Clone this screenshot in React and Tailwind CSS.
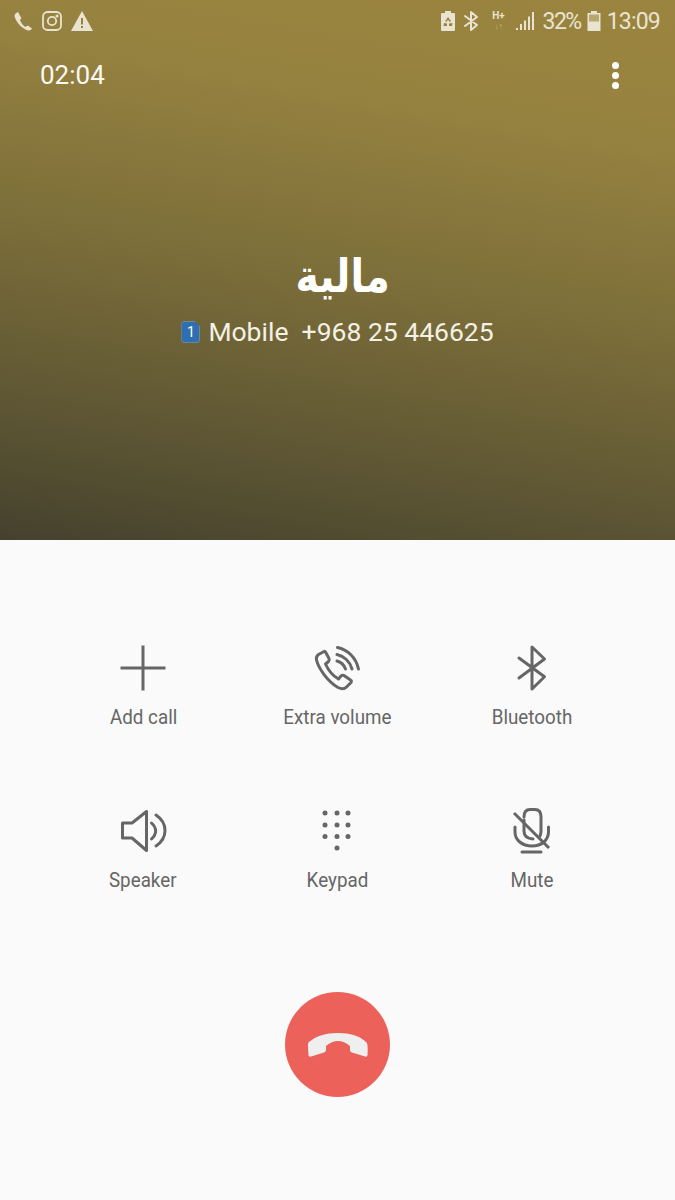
import { Fragment } from 'react'

const stroke = '#666666'

function AddIcon() {
  return (
    <svg width="48" height="48" viewBox="0 0 48 48" fill="none" stroke={stroke} strokeWidth="3">
      <path d="M24 1.500V46.500M1.500 24H46.500" />
    </svg>
  )
}

function VolumeIcon() {
  return (
    <svg width="48" height="48" viewBox="0 0 48 48" fill="none" stroke={stroke} strokeWidth="3" strokeLinecap="round" strokeLinejoin="round">
      <path d="M11 7.500 5.500 10.500C3.500 12 3 14 3.500 16 5.500 24 14 37 25 43.500 29 45.500 31.500 45 33.500 43L38 38.500C38.500 37.500 38.500 36.500 37.500 36L31 31.500C30 31 29 31 28 32L25.500 35C20 32 15 25.500 12.500 20L15.500 17.500C16.500 16.500 16.500 15.500 16 14.500L12.500 8C12 7.500 11.500 7.200 11 7.500Z" />
      <path d="M24 17C28 18 31 21 32.500 25" />
      <path d="M24 10.500C31 12 37 17.500 39 25" />
      <path d="M24.500 3.500C34 5.500 43 13 45.500 25" />
    </svg>
  )
}

function BluetoothIcon() {
  return (
    <svg width="48" height="48" viewBox="0 0 48 48" fill="none" stroke={stroke} strokeWidth="3" strokeLinecap="round" strokeLinejoin="round">
      <path d="M11 14 36.500 32.700 24 45V3L36.500 15 11 34" />
    </svg>
  )
}

function SpeakerIcon() {
  return (
    <svg width="48" height="48" viewBox="0 0 48 48" fill="none" stroke={stroke} strokeWidth="3" strokeLinecap="round" strokeLinejoin="round">
      <path d="M3.500 16H13L27.500 4.500V43.500L13 31H3.500Z" />
      <path d="M32.500 16C38 21 38 27 32.500 32" />
      <path d="M37 8C49 16 49 31 37 39" />
    </svg>
  )
}

function KeypadIcon() {
  const rows = [6, 18, 29.500]
  const cols = [12, 24, 35]
  return (
    <svg width="48" height="48" viewBox="0 0 48 48" fill={stroke}>
      {rows.map((y) => (
        <Fragment key={y}>
          {cols.map((x) => (
            <circle key={x} cx={x} cy={y} r="2.500" />
          ))}
        </Fragment>
      ))}
      <circle cx="24" cy="41" r="2.500" />
    </svg>
  )
}

function MuteIcon() {
  return (
    <svg width="48" height="48" viewBox="0 0 48 48" fill="none" stroke={stroke} strokeWidth="3" strokeLinecap="round">
      <path d="M16 10C16 5 18.500 2.500 22 2.500H27C30.500 2.500 33 5 33 10V24C33 26 32.800 27.500 32 29M16 13V24C16 28 18.500 31.500 25 32" />
      <path d="M7 20V25C7 33 14 39 24 39 30 39 33 37.500 36 35 39 32 40.500 29 40.500 25V20" />
      <path d="M14 45H33" />
      <path d="M6 6 41 41" strokeLinecap="butt" />
    </svg>
  )
}

function HangupIcon() {
  return (
    <svg width="60" height="24" viewBox="0 0 60 24" fill="#eef0f0">
      <path d="M1 9C8 3 18 0 30 0S52 3 58 9C59.500 10.500 60 12 59.500 22 59.300 23.500 58.500 24 57 23.500L44 19.500C42.800 19 42 18 42 16.500V13C38 9.500 34 8 30 8S22 9.500 18 13V16.500C18 18 17.200 19 16 19.500L3 23.500C1.500 24 .700 23.500 .500 22 0 12 -.500 10.500 1 9Z" />
    </svg>
  )
}

function StatusLeft() {
  return (
    <div className="flex items-center gap-[9px]">
      <svg width="20" height="20" viewBox="0 0 20 20" fill="#e9e4d2">
        <path d="M5 1 8 6.500C8.500 7.500 8 8 7 9 8 12 10 14.500 12.500 16 13.500 15 14.500 14.500 15.500 15L19 17.500C18 19 16.500 19.700 15 19.500 8 17 3 11 1.500 5 1.500 3.500 3 1.500 5 1Z" />
      </svg>
      <svg width="20" height="20" viewBox="0 0 20 20" fill="none" stroke="#e9e4d2" strokeWidth="1.800">
        <rect x="1" y="1" width="18" height="18" rx="4.500" />
        <circle cx="10" cy="10" r="4.200" />
        <circle cx="15" cy="5" r="0.700" fill="#e9e4d2" />
      </svg>
      <svg width="22" height="20" viewBox="0 0 22 20">
        <path fillRule="evenodd" fill="#e9e4d2" d="M11 0 22 20H0ZM10 7V13.500H12V7ZM10 15V17H12V15Z" />
      </svg>
    </div>
  )
}

function StatusRight() {
  return (
    <div className="flex items-center text-[#e9e4d2]">
      <svg width="14" height="20" viewBox="0 0 14 20" fill="#e9e4d2" className="mr-[9px]">
        <path fillRule="evenodd" d="M4 0H10V2H13C13.500 2 14 2.500 14 3V19C14 19.500 13.500 20 13 20H1C.500 20 0 19.500 0 19V3C0 2.500 .500 2 1 2H4ZM7 6 4 10.500H6L7 8.500 8.500 11 10 10ZM3 12 2.500 15H6V12.500ZM11.500 12 8 12.500V15H11Z" />
      </svg>
      <svg width="14" height="20" viewBox="0 0 14 20" fill="none" stroke="#e9e4d2" strokeWidth="2" strokeLinecap="round" strokeLinejoin="round" className="mr-[14px]">
        <path d="M1 5 13 14 7 19V1L13 6 1 15" />
      </svg>
      <div className="mr-[10px] flex w-[14px] flex-col items-center font-bold leading-none">
        <span className="text-[10px] leading-[10px]">H+</span>
        <span className="mt-[2px] text-[8px] leading-[8px] text-[#c4b47f]">↓↑</span>
      </div>
      <svg width="18" height="20" viewBox="0 0 18 20" fill="#e9e4d2" className="mr-[9px]">
        <rect x="0" y="17" width="2" height="2" />
        <rect x="4" y="13" width="2" height="6" />
        <rect x="8" y="9.500" width="2" height="9.500" />
        <rect x="12" y="5.500" width="2" height="13.500" />
        <rect x="16" y="1" width="2" height="18" />
      </svg>
      <span className="mr-[6px] text-[23px] leading-none tracking-[-1.500px]">32%</span>
      <svg width="14" height="20" viewBox="0 0 14 20" className="mr-[6px]">
        <path fill="#e9e4d2" d="M4 0H10V2H13.500V20H.500V2H4Z" />
        <rect x="2" y="3.500" width="10" height="7" fill="#b8a76f" />
      </svg>
      <span className="text-[23px] leading-none tracking-[-0.800px]">13:09</span>
    </div>
  )
}

const actions = [
  { label: 'Add call', icon: <AddIcon /> },
  { label: 'Extra volume', icon: <VolumeIcon /> },
  { label: 'Bluetooth', icon: <BluetoothIcon /> },
  { label: 'Speaker', icon: <SpeakerIcon /> },
  { label: 'Keypad', icon: <KeypadIcon /> },
  { label: 'Mute', icon: <MuteIcon /> },
]

export default function App() {
  return (
    <div className="flex h-[1200px] w-[675px] flex-col overflow-hidden bg-[#fafafa] font-['Roboto',sans-serif]">
      {/* Call header */}
      <div className="flex h-[540px] flex-col bg-[linear-gradient(190deg,#9a843e_0%,#968240_22%,#7d6f3a_50%,#5f5734_78%,#45412d_100%)] text-white">
        <div className="flex h-[42px] items-center justify-between pl-[13px] pr-[15px]">
          <StatusLeft />
          <StatusRight />
        </div>
        <div className="flex h-[66px] items-center justify-between pl-[40px] pr-[56px]">
          <span className="text-[26px] leading-none text-[#fbf9f1]">02:04</span>
          <div className="flex flex-col gap-[3px]">
            <span className="h-[7px] w-[7px] rounded-full bg-white" />
            <span className="h-[7px] w-[7px] rounded-full bg-white" />
            <span className="h-[7px] w-[7px] rounded-full bg-white" />
          </div>
        </div>
        <div dir="rtl" className="mt-[136px] scale-x-[0.86] pl-[12px] text-center font-['Noto_Sans','DejaVu_Sans',sans-serif] text-[46px] font-bold leading-[60px]">
          مالية
        </div>
        <div className="mt-[10px] flex items-center justify-center text-[26.500px] leading-[36px] text-[#f4f1e4]">
          <span className="mr-[8px] flex h-[22px] w-[19px] items-center justify-center rounded-[3px] border border-[#6f8a96] bg-[#2f6eb0] text-[14px] leading-none text-white [clip-path:polygon(0_0,70%_0,100%_25%,100%_100%,0_100%)]">
            1
          </span>
          <span className="whitespace-pre">Mobile  +968 25 446625</span>
        </div>
      </div>

      {/* Call actions */}
      <div className="grid grid-cols-3 gap-y-[78px] px-[46px] pt-[104px]">
        {actions.map((a) => (
          <div key={a.label} className="flex flex-col items-center">
            {a.icon}
            <span className="mt-[13px] scale-x-[0.895] whitespace-nowrap text-[21px] leading-[24px] text-[#666666]">{a.label}</span>
          </div>
        ))}
      </div>

      {/* End call */}
      <div className="mt-[100px] flex justify-center">
        <div className="flex h-[105px] w-[105px] items-center justify-center rounded-full bg-[#ec625a]">
          <HangupIcon />
        </div>
      </div>
    </div>
  )
}
